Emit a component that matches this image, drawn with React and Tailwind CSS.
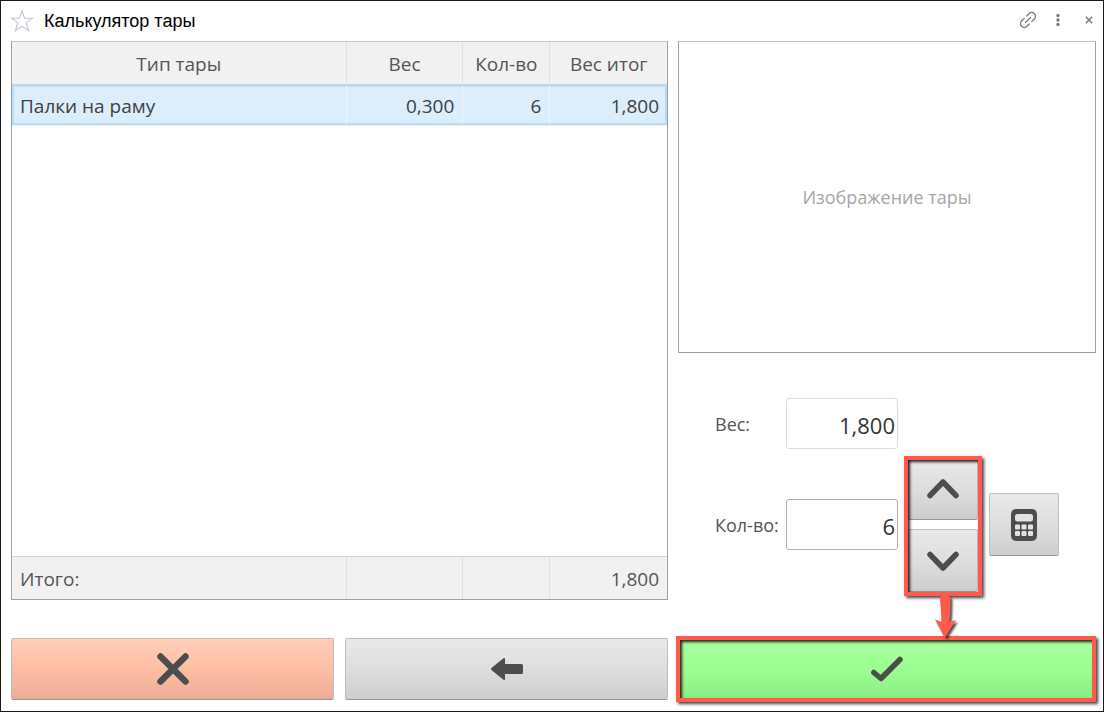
import React from "react";

const buttonBase =
  "flex items-center justify-center rounded-[2px] border border-[#bdbdbd] border-b-[#979797] text-[#4d4d4d]";
const greyFill = "bg-linear-to-b from-[#e9e9e9] via-[#dedede] to-[#cdcdcd]";

function Highlight({ className }) {
  return (
    <span
      aria-hidden="true"
      className={`pointer-events-none absolute border-4 border-[#ff5a4b] shadow-[2px_2px_3px_rgba(0,0,0,0.75),inset_2px_2px_3px_rgba(0,0,0,0.85)] ${className}`}
    />
  );
}

function Chevron({ down }) {
  return (
    <svg width="34" height="22" viewBox="0 0 34 22" fill="none" stroke="currentColor" strokeWidth="5.5" strokeLinecap="round" strokeLinejoin="round">
      <path d={down ? "M4 4.5 17 18 30 4.5" : "M4 17.5 17 4 30 17.5"} />
    </svg>
  );
}

function CalculatorIcon() {
  return (
    <svg width="28" height="34" viewBox="0 0 28 34">
      <rect x="1" y="1" width="26" height="32" rx="5" fill="currentColor" />
      <g fill="#e2e2e2">
        <rect x="5" y="6" width="18" height="7.5" rx="2.5" />
        {[5, 11.5, 18].map((x) =>
          [16.5, 23].map((y) => <rect key={`${x}-${y}`} x={x} y={y} width="5" height="5" rx="1" />)
        )}
      </g>
    </svg>
  );
}

function TitleBar() {
  return (
    <header className="flex h-10 items-center pr-2 pl-[9px]">
      <button aria-label="В избранное" className="text-[#c3c8d0]">
        <svg width="24" height="24" viewBox="0 0 24 24" fill="none" stroke="currentColor" strokeWidth="1.1">
          <path d="M12 1.8 14.6 9.2H22.6L16.2 13.9 18.7 21.8 12 17.1 5.3 21.8 7.8 13.9 1.4 9.2H9.4Z" />
        </svg>
      </button>
      <h1 className="ml-[10px] flex-1 font-['Liberation_Sans',sans-serif] text-[18px] leading-6 text-black">
        Калькулятор тары
      </h1>
      <div className="flex items-center pb-0.5 text-[#7d7d7d]">
        <button aria-label="Ссылка">
          <svg width="18" height="18" viewBox="0 0 18 18" fill="none" stroke="currentColor" strokeWidth="1.4" strokeLinecap="round">
            <g transform="rotate(-45 9 9)">
              <path d="M7 12.800H3.800A3.800 3.800 0 0 1 3.800 5.200H7.500" />
              <path d="M11 5.200H14.200A3.800 3.800 0 0 1 14.200 12.800H10.500" />
              <path d="M5.500 9H12.500" />
            </g>
          </svg>
        </button>
        <button aria-label="Меню" className="ml-[16px]">
          <svg width="10" height="14" viewBox="0 0 10 14" fill="currentColor">
            <circle cx="5" cy="2.5" r="1.7" />
            <circle cx="5" cy="7" r="1.7" />
            <circle cx="5" cy="11.5" r="1.7" />
          </svg>
        </button>
        <button aria-label="Закрыть" className="ml-[20px]">
          <svg width="12" height="12" viewBox="0 0 12 12" stroke="currentColor" strokeWidth="1.5">
            <path d="M2.8 2.8 9.2 9.2M9.2 2.8 2.8 9.2" />
          </svg>
        </button>
      </div>
    </header>
  );
}

function TareTable() {
  const divider = "border-r border-[#dfdfdf]";
  const head = "border-b border-b-[#cfcfcf] pt-0.5 font-normal";
  const foot = "border-t border-t-[#d4d4d4] pt-0.5";
  const body = "border-y-2 border-[#b9dcf8] pt-0.5";
  return (
    <div className="flex border border-[#a0a0a0] border-t-[#c4c4c4]">
      <table className="w-full table-fixed border-separate border-spacing-0 text-[19px] leading-6 text-[#555]">
        <colgroup>
          <col className="w-[51.1%]" />
          <col className="w-[17.8%]" />
          <col className="w-[13.3%]" />
          <col className="w-[17.8%]" />
        </colgroup>
        <thead className="bg-[#f1f1f1]">
          <tr className="h-[43px]">
            <th className={`${head} ${divider}`}>Тип тары</th>
            <th className={`${head} ${divider}`}>Вес</th>
            <th className={`${head} ${divider}`}>Кол-во</th>
            <th className={head}>Вес итог</th>
          </tr>
        </thead>
        <tbody>
          <tr className="h-[40px] bg-[#dceefc] text-right text-[#404040]">
            <td className={`${body} border-r border-l-2 border-r-[#edf6fd] pl-[6px] text-left`}>
              Палки на раму
            </td>
            <td className={`${body} border-r border-r-[#edf6fd] pr-2`}>0,300</td>
            <td className={`${body} border-r border-r-[#edf6fd] pr-2`}>6</td>
            <td className={`${body} border-r-2 pr-[6px]`}>1,800</td>
          </tr>
          <tr>
            <td colSpan={4} className="border-t border-[#ececec]" />
          </tr>
        </tbody>
        <tfoot className="bg-[#f1f1f1]">
          <tr className="h-[43px]">
            <td className={`${foot} pl-2 ${divider}`}>Итого:</td>
            <td className={`${foot} ${divider}`} />
            <td className={`${foot} ${divider}`} />
            <td className={`${foot} pr-2 text-right`}>1,800</td>
          </tr>
        </tfoot>
      </table>
    </div>
  );
}

function QuantityForm() {
  const field =
    "h-[51px] w-28 rounded-[3px] border bg-white pt-0.5 pr-[2px] text-right text-[22px] text-[#333] outline-none";
  const label = "w-[71px] shrink-0 pt-0.5 text-[18px] text-[#555]";
  return (
    <form className="mt-[45px] flex flex-col gap-2 pb-2 pl-[37px]" onSubmit={(e) => e.preventDefault()}>
      <div className="flex items-center">
        <label htmlFor="weight" className={label}>Вес:</label>
        <input id="weight" readOnly value="1,800" className={`${field} border-[#dcdcdc]`} />
      </div>
      <div className="flex items-center">
        <label htmlFor="count" className={label}>Кол-во:</label>
        <input id="count" defaultValue="6" className={`${field} border-[#b0b0b0]`} />
        <div className="relative ml-[10px] flex w-[70px] flex-col gap-[9px]">
          <button type="button" aria-label="Больше" className={`h-[63px] ${buttonBase} ${greyFill}`}>
            <Chevron />
          </button>
          <button type="button" aria-label="Меньше" className={`h-[63px] ${buttonBase} ${greyFill}`}>
            <Chevron down />
          </button>
          <Highlight className="-top-px -right-1 -bottom-1 -left-1" />
          <svg
            aria-hidden="true"
            width="30"
            height="46"
            viewBox="0 0 30 46"
            className="absolute top-full left-[24px] z-10 mt-[2px] drop-shadow-[2px_2px_1px_rgba(0,0,0,0.7)]"
          >
            <path d="M8 5Q8 1 13 1 18.500 1 18.500 5.500 18.500 17 17.500 28L24 26 12.800 44 3 25.500 9.500 28Q9 16 8 5Z" fill="#ff5a4b" />
          </svg>
        </div>
        <button type="button" aria-label="Калькулятор" className={`ml-[11px] h-[63px] w-[70px] ${buttonBase} ${greyFill}`}>
          <CalculatorIcon />
        </button>
      </div>
    </form>
  );
}

function Actions() {
  return (
    <footer className="mt-[38px] grid grid-cols-[657fr_418fr] gap-[10px]">
      <div className="grid grid-cols-2 gap-[11px]">
        <button
          aria-label="Отмена"
          className={`h-[62px] ${buttonBase} bg-linear-to-b from-[#ffcdb9] via-[#ffbea4] to-[#e9ad96]`}
        >
          <svg width="34" height="34" viewBox="0 0 34 34" stroke="currentColor" strokeWidth="6.5" strokeLinecap="round">
            <path d="M4.500 4.500 29.500 29.500M29.500 4.500 4.500 29.500" />
          </svg>
        </button>
        <button aria-label="Назад" className={`h-[62px] ${buttonBase} ${greyFill}`}>
          <svg width="34" height="24" viewBox="0 0 34 24" fill="currentColor">
            <path d="M1 12Q1 11.300 2 10.500L13.500 1.300Q15 .3 15 2V7H31.500Q33 7 33 8.500V15.500Q33 17 31.500 17H15V22Q15 23.700 13.500 22.700L2 13.500Q1 12.700 1 12Z" />
          </svg>
        </button>
      </div>
      <div className="relative">
        <button
          aria-label="Подтвердить"
          className={`h-[62px] w-full ${buttonBase} bg-linear-to-b from-[#acffa2] via-[#9aff90] to-[#8ceb83]`}
        >
          <svg width="34" height="28" viewBox="0 0 34 28" fill="none" stroke="currentColor" strokeWidth="5.5" strokeLinecap="round" strokeLinejoin="round">
            <path d="M3.800 17.500 11 23.500 30 4.500" />
          </svg>
        </button>
        <Highlight className="-top-[2px] right-0 -bottom-[2px] -left-[2px]" />
      </div>
    </footer>
  );
}

export default function App() {
  return (
    <div className="flex min-h-screen flex-col border border-[#1c1c1c] bg-white font-['Open_Sans','Noto_Sans',sans-serif]">
      <TitleBar />
      <main className="flex flex-1 flex-col pr-[7px] pb-[11px] pl-[10px]">
        <div className="grid flex-1 grid-cols-[657fr_418fr] gap-[10px]">
          <TareTable />
          <section className="flex flex-col">
            <div className="flex min-h-60 flex-1 items-center justify-center border border-[#a0a0a0] border-t-[#c4c4c4] text-[18px] text-[#a6a6a6]">
              Изображение тары
            </div>
            <QuantityForm />
          </section>
        </div>
        <Actions />
      </main>
    </div>
  );
}
